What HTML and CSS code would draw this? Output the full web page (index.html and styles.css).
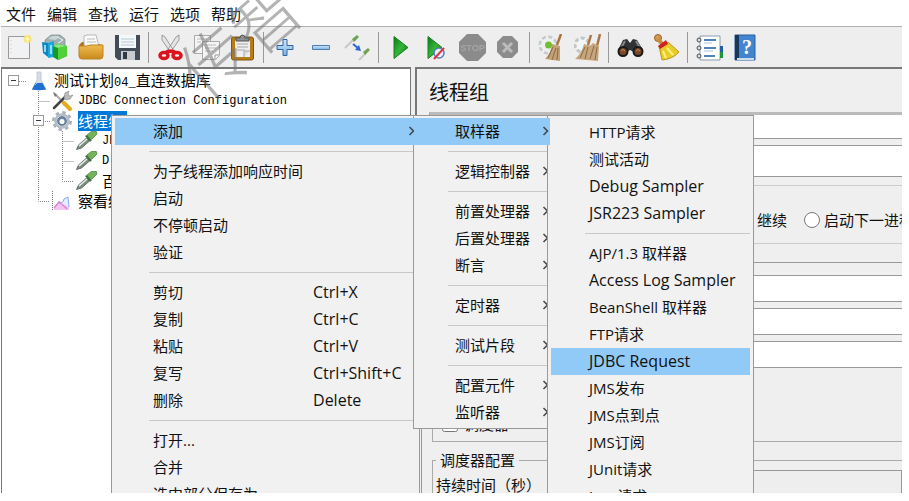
FILE: index.html
```html
<!DOCTYPE html>
<html lang="zh-CN">
<head>
<meta charset="utf-8">
<title>JMeter</title>
<link rel="stylesheet" href="styles.css">
</head>
<body>
<svg class="defs" aria-hidden="true">
  <defs>
    <linearGradient id="blue" x1="0" y1="0" x2="0" y2="1"><stop offset="0" stop-color="#cfe6f8"/><stop offset="1" stop-color="#7db2e0"/></linearGradient>
    <linearGradient id="gold" x1="0" y1="0" x2="0" y2="1"><stop offset="0" stop-color="#f0bb50"/><stop offset="1" stop-color="#c98a1c"/></linearGradient>
    <linearGradient id="play" x1="0" y1="0" x2="1" y2="1"><stop offset="0" stop-color="#0b7a18"/><stop offset=".5" stop-color="#35b53a"/><stop offset="1" stop-color="#0a6a14"/></linearGradient>
    <symbol id="chev" viewBox="0 0 8 10"><path d="M1.500 1l4 4-4 4" fill="none" stroke="#444" stroke-width="1.500"/></symbol>
    <symbol id="tee" viewBox="0 0 24 20"><path d="M12.500 0v20M12.500 10.500H24" stroke="#888" stroke-dasharray="1 1" fill="none"/></symbol>
    <symbol id="elbow" viewBox="0 0 24 20"><path d="M12.500 0v10.500H24" stroke="#888" stroke-dasharray="1 1" fill="none"/></symbol>
    <symbol id="line" viewBox="0 0 24 20"><path d="M12.500 0v20" stroke="#888" stroke-dasharray="1 1" fill="none"/></symbol>
    <symbol id="minus" viewBox="0 0 24 20"><path d="M17 10.500h7" stroke="#888" stroke-dasharray="1 1"/><rect x="6.500" y="4.500" width="10" height="10" fill="#fff" stroke="#999"/><path d="M9 9.500h5" stroke="#334"/></symbol>
    <symbol id="minusline" viewBox="0 0 24 20"><path d="M12.500 0v20M17 10.500h7" stroke="#888" stroke-dasharray="1 1"/><rect x="7.500" y="4.500" width="10" height="10" fill="#fff" stroke="#999"/><path d="M10 9.500h5" stroke="#334"/></symbol>
    <symbol id="flask" viewBox="0 0 24 20"><path d="M11 1h4v8l5 9.500H6L11 9z" fill="#d5dde6" stroke="#b5bec8" stroke-width=".7"/><path d="M9.500 12h7l3.500 6.500q-7 1.500-14 0z" fill="#1e6fd0"/><path d="M9 14l2-2" stroke="#8cc0f5"/></symbol>
    <symbol id="tools" viewBox="0 0 24 20"><path d="M4 2l11 11" stroke="#aaa" stroke-width="2"/><path d="M3 1l4 3-2 2z" fill="#777"/><path d="M14 12l6 6" stroke="#e3ad18" stroke-width="4" stroke-linecap="round"/><path d="M4 17L16 5" stroke="#444" stroke-width="2.500" stroke-linecap="round"/><path d="M14 7l1-5 4-2-1 4 2 1 3-1-3 4-4 1z" fill="#bbb" stroke="#888" stroke-width=".6"/></symbol>
    <symbol id="gear" viewBox="0 0 24 20"><g fill="none"><circle cx="12" cy="10" r="8.500" stroke="#a9b2bc" stroke-width="3" stroke-dasharray="3.400 3.270"/><circle cx="12" cy="10" r="6.500" fill="#d9dfe6" stroke="#b4bcc5" stroke-width="2.500"/><circle cx="12" cy="10" r="4.300" fill="#6d86a7" stroke="#556e91"/><circle cx="12" cy="10.500" r="2.500" fill="#fff"/></g></symbol>
    <symbol id="dropper" viewBox="0 0 24 20"><path d="M2.500 18.500l2-4.500 8-7 3 3-8 7z" fill="#7d8c80" stroke="#4d5c51" stroke-width=".8"/><path d="M5 15l8-7" stroke="#e6f0e8" stroke-width="1.500"/><path d="M11 5l2-1 5 5-2 2z" fill="#3b743a"/><path d="M13 4l5-4h4l1 3-5 5z" fill="#74b35c" stroke="#4a8a3c" stroke-width=".8"/></symbol>
    <symbol id="chart" viewBox="0 0 24 20"><path d="M2.500 0v19" stroke="#777" stroke-dasharray="1 1"/><path d="M4 17l5-7 5 3 5 3v3H4z" fill="#f3c6f1"/><path d="M4 17l5-6 5 4 3 3" stroke="#d982d9" fill="none" stroke-width="1.500"/><path d="M9 11q4 2 5-3l4-2 1 10" fill="#e4eeff" stroke="#85abe8"/></symbol>
  </defs>
</svg>
<div class="app">
  <nav class="menubar">
    <button>文件</button><button>编辑</button><button>查找</button><button>运行</button><button>选项</button><button>帮助</button>
  </nav>
  <div class="toolbar">
    <button aria-label="新建"><svg viewBox="0 0 27 27"><path d="M2.500 2.500h21v22h-21z" fill="#f1f2f3" stroke="#999"/><path d="M5 6v16" stroke="#ccc" stroke-dasharray="1 3"/><circle cx="21.500" cy="5" r="4" fill="#f6e46b" opacity=".85"/><path d="M19 5h5M21.500 2v6" stroke="#fff8b0" stroke-width="1.500"/></svg></button>
    <button aria-label="模板"><svg viewBox="0 0 27 27"><path d="M3 6l6-5h9l5 4v9H3z" fill="#9fb0b3" stroke="#7c8c90" stroke-width=".7"/><path d="M6 5l4-3h7l-3 4z" fill="#c9d6d7"/><path d="M15 3l6 3-5 3" stroke="#e8f1f2" fill="none"/><path d="M0 8l6 1v14l-5-4z" fill="#0d86c9"/><path d="M6 9l6-2v16l-6 1z" fill="#19a9d8"/><path d="M3 11v7M9 11v9" stroke="#c8f2f6" stroke-width="1.500"/><path d="M11 12l5-2 9 2v10l-9 4-5-3z" fill="#149b22"/><path d="M16 14l9-2v10l-9 4z" fill="#4fd13c"/><path d="M11 12l5-2 9 2-9 2z" fill="#8be87a"/></svg></button>
    <button aria-label="打开"><svg viewBox="0 0 27 27"><path d="M1 11l3-3h4l1 2h13l3 3v8H1z" fill="#ad7419"/><path d="M6 13V2l3-1h9l3 12z" fill="#fafafa" stroke="#aaa" stroke-width=".8"/><path d="M9 5h8M9 8h9" stroke="#bbb"/><path d="M1 12h8l3-1h13v11q0 3-3 3H4q-3 0-3-3z" fill="url(#gold)" stroke="#bd8322"/></svg></button>
    <button aria-label="保存"><svg viewBox="0 0 27 27"><path d="M1 1h25v25H4l-3-3z" fill="#424c57"/><path d="M5 1h17v13H5z" fill="#f4f8fa"/><path d="M7 5h13M7 8h13M7 11h13" stroke="#b3cbd5"/><path d="M7 17h14v9H7z" fill="#c5cbd0"/><path d="M9 18h4v7H9z" fill="#303841"/></svg></button>
    <span class="sep"></span>
    <button aria-label="剪切"><svg viewBox="0 0 27 27"><path d="M5 1l3 2 9 14-3 2L5 6zM22 1l-3 2-9 14 3 2 9-13z" fill="#e2e4e6" stroke="#888" stroke-width=".8"/><g fill="none" stroke="#d9141c" stroke-width="3.500"><ellipse cx="7" cy="21.500" rx="4" ry="3"/><ellipse cx="20" cy="21.500" rx="4" ry="3"/><path d="M9 18l4.500-1 4.500 1"/></g></svg></button>
    <button aria-label="复制"><svg viewBox="0 0 27 27"><g fill="#f5f5f5" stroke="#aaa"><path d="M1.500 1.500h16v18h-16z"/><path d="M9.500 7.500h17v14l-4 4h-13z"/></g><path d="M4 5h10M4 8h4M12 11h11M12 14h11M12 17h8" stroke="#bbb"/><path d="M22 25v-4h4" fill="none" stroke="#999"/></svg></button>
    <button aria-label="粘贴"><svg viewBox="0 0 27 27"><rect x="2.500" y="3" width="22" height="23" rx="2" fill="#b77c15" stroke="#805617"/><path d="M6 6h15v17H6z" fill="#eee"/><path d="M8 10h11M8 13h11M8 16h8" stroke="#aaa"/><path d="M15 23v-6h6" fill="#ddd" stroke="#aaa"/><path d="M7 7V4h4q0-3 2.500-3T16 4h4v3z" fill="#8a908f" stroke="#555"/></svg></button>
    <span class="sep"></span>
    <button aria-label="展开"><svg viewBox="0 0 27 27"><path d="M11 5.500h4v6h6v4h-6v6h-4v-6H5v-4h6z" fill="url(#blue)" stroke="#2c66a4"/></svg></button>
    <button aria-label="折叠"><svg viewBox="0 0 27 27"><path d="M4.500 11.500h17v4h-17z" fill="url(#blue)" stroke="#4c7eb2"/></svg></button>
    <button aria-label="切换"><svg viewBox="0 0 27 27"><path d="M1 14L9 6M15 26l7-7" stroke="#c6c9c4" stroke-width="2"/><path d="M8 5l5-4 2 2-5 5zM19 18l5-4 2 2-5 5z" fill="#6da455"/><path d="M9 10l5 4" stroke="#2a68c9" stroke-width="2"/><path d="M17 17l-6-1 4-5z" fill="#2a68c9"/></svg></button>
    <span class="sep"></span>
    <button aria-label="启动"><svg viewBox="0 0 27 27"><path d="M7 2.500v22L21 13.500z" fill="url(#play)" stroke="#16811d"/></svg></button>
    <button aria-label="不停顿启动"><svg viewBox="0 0 27 27"><path d="M5 2.500v22L19 13.500z" fill="url(#play)" stroke="#16811d"/><circle cx="16" cy="19" r="5" fill="#eef4ff" stroke="#4f7fc4" stroke-width="1.500"/><path d="M11 25l10-11" stroke="#dd3540" stroke-width="2"/></svg></button>
    <button aria-label="停止"><svg viewBox="0 0 27 27"><path d="M8 0h11l8 8v11l-8 8H8l-8-8V8z" fill="#8b8b8b"/><text x="13.500" y="17" class="stop">STOP</text></svg></button>
    <button aria-label="关闭"><svg viewBox="0 0 27 27"><path d="M8 2h9l6 6v10l-6 6H8l-6-6V8z" fill="#8c8c8c"/><path d="M8 9l9 9M17 9l-9 9" stroke="#bbb" stroke-width="3"/></svg></button>
    <span class="sep"></span>
    <button aria-label="清除"><svg viewBox="0 0 27 27"><circle cx="10" cy="11" r="8" fill="#f5f5f5" stroke="#c6cacb" stroke-width="3" stroke-dasharray="4 2.280"/><circle cx="10" cy="11" r="7" fill="#edf0f0"/><path d="M23 0l-4 11" stroke="#a87542" stroke-width="2.500"/><path d="M14 10l8 2v15l-15-2q6-6 7-15z" fill="#c3a176"/><path d="M15 13l-5 11M18 14l-4 12M20 14l-1 12" stroke="#8e6941"/><circle cx="10.500" cy="11" r="3.500" fill="#71bf30"/></svg></button>
    <button aria-label="清除全部"><svg viewBox="0 0 27 27"><circle cx="8" cy="11" r="7" fill="#f4f5f5" stroke="#bec7cb" stroke-width="3" stroke-dasharray="4 2.280"/><path d="M17 1l-3 10M26 0l-3 12" stroke="#aa7848" stroke-width="2.500"/><path d="M10 10l6 2 3-3 6 3-1 15-23-2q7-6 9-15z" fill="#c6a67d"/><path d="M11 13L6 24M14 13l-3 12M20 12l-4 13M23 13l-2 13" stroke="#8e6941"/></svg></button>
    <span class="sep"></span>
    <button aria-label="查找"><svg viewBox="0 0 27 27"><path d="M1 16l5-10 4-1 3 4 3-4 4 1 6 10-5 4-8-4-7 4z" fill="#303234"/><path d="M8 7l-4 7M19 7l4 7" stroke="#85898b" stroke-width="2"/><g fill="#7c4725" stroke="#17191b" stroke-width="2"><circle cx="6" cy="17.500" r="4.500"/><circle cx="21" cy="17.500" r="4.500"/></g><path d="M4 17q2-3 4 0M19 17q2-3 4 0" fill="none" stroke="#c78a58"/></svg></button>
    <button aria-label="重置查找"><svg viewBox="0 0 27 27"><circle cx="5" cy="4" r="3.500" fill="#d49b50" stroke="#986228"/><path d="M5 5l5 6" stroke="#c98d42" stroke-width="4"/><path d="M6 12l9-4 11 10q-6 7-17 8z" fill="#e9cc26" stroke="#b89a1f"/><path d="M5 12l8-6 2 4-8 5z" fill="#d02222"/><path d="M10 17l3 7M14 14l6 7" stroke="#fff282" stroke-width="2"/></svg></button>
    <span class="sep"></span>
    <button aria-label="函数助手"><svg viewBox="0 0 27 27"><path d="M4 2h20v24H4z" fill="#fff" stroke="#8b9aab"/><path d="M24 12h3v6h-3z" fill="#235ba7"/><path d="M24 18h3v6h-3z" fill="#20933b"/><path d="M8 6h12M8 14h12M8 22h11" stroke="#4d83b8" stroke-width="2"/><path d="M8 9h8M8 17h9" stroke="#a8c4df"/><g fill="#ddd" stroke="#4b4f52"><circle cx="3" cy="6" r="2"/><circle cx="3" cy="14" r="2"/><circle cx="3" cy="22" r="2"/></g></svg></button>
    <button aria-label="帮助"><svg viewBox="0 0 27 27"><path d="M3 1h20v25H3z" fill="#4284d0" stroke="#285e9c"/><path d="M3 1h4v25H3z" fill="#173858"/><path d="M5 24h17v2H5z" fill="#cbdde9"/><text x="15" y="20" class="q">?</text></svg></button>
  </div>
  <div class="split">
    <div class="tree">
      <div class="row"><svg><use href="#minus"/></svg><svg><use href="#flask"/></svg><span>测试计划<b class="mono">04_</b>直连数据库</span></div>
      <div class="row"><i></i><svg><use href="#tee"/></svg><svg><use href="#tools"/></svg><span class="mono">JDBC Connection Configuration</span></div>
      <div class="row"><i></i><svg><use href="#minusline"/></svg><svg><use href="#gear"/></svg><span class="selected">线程组</span></div>
      <div class="row"><i></i><svg><use href="#line"/></svg><svg><use href="#tee"/></svg><svg><use href="#dropper"/></svg><span class="mono">JD</span></div>
      <div class="row"><i></i><svg><use href="#line"/></svg><svg><use href="#tee"/></svg><svg><use href="#dropper"/></svg><span class="mono">D</span></div>
      <div class="row"><i></i><svg><use href="#line"/></svg><svg><use href="#elbow"/></svg><svg><use href="#dropper"/></svg><span>百</span></div>
      <div class="row"><i></i><svg><use href="#elbow"/></svg><svg><use href="#chart"/></svg><span>察看结</span></div>
    </div>
    <div class="divider"></div>
    <main class="panel">
      <h1>线程组</h1>
      <input class="field name" type="text" aria-label="名称">
      <input class="field note" type="text" aria-label="注释">
      <div class="actions">
        <label><input type="radio" name="action">继续</label>
        <label><input type="radio" name="action">启动下一进程循环</label>
      </div>
      <div class="props">
        <div class="box">
          <input class="field" type="text" aria-label="线程数">
          <input class="field" type="text" aria-label="时间">
          <input class="field" type="text" aria-label="循环次数">
          <label class="check"><input type="checkbox">调度器</label>
        </div>
        <fieldset>
          <legend>调度器配置</legend>
          <div class="duration"><label for="dur">持续时间（秒）</label><input id="dur" type="text" disabled></div>
        </fieldset>
      </div>
    </main>
  </div>

  <ul class="menu context">
    <li><button class="item open">添加<svg class="arrow"><use href="#chev"/></svg></button></li>
    <li class="rule"></li>
    <li><button class="item">为子线程添加响应时间</button></li>
    <li><button class="item">启动</button></li>
    <li><button class="item">不停顿启动</button></li>
    <li><button class="item">验证</button></li>
    <li class="rule"></li>
    <li><button class="item">剪切<kbd class="latin">Ctrl+X</kbd></button></li>
    <li><button class="item">复制<kbd class="latin">Ctrl+C</kbd></button></li>
    <li><button class="item">粘贴<kbd class="latin">Ctrl+V</kbd></button></li>
    <li><button class="item">复写<kbd class="latin">Ctrl+Shift+C</kbd></button></li>
    <li><button class="item">删除<kbd class="latin">Delete</kbd></button></li>
    <li class="rule"></li>
    <li><button class="item">打开...</button></li>
    <li><button class="item">合并</button></li>
    <li><button class="item">选中部分保存为</button></li>
  </ul>
  <ul class="menu add">
    <li><button class="item open">取样器<svg class="arrow"><use href="#chev"/></svg></button></li>
    <li class="rule"></li>
    <li><button class="item">逻辑控制器<svg class="arrow"><use href="#chev"/></svg></button></li>
    <li class="rule"></li>
    <li><button class="item">前置处理器<svg class="arrow"><use href="#chev"/></svg></button></li>
    <li><button class="item">后置处理器<svg class="arrow"><use href="#chev"/></svg></button></li>
    <li><button class="item">断言<svg class="arrow"><use href="#chev"/></svg></button></li>
    <li class="rule"></li>
    <li><button class="item">定时器<svg class="arrow"><use href="#chev"/></svg></button></li>
    <li class="rule"></li>
    <li><button class="item">测试片段<svg class="arrow"><use href="#chev"/></svg></button></li>
    <li class="rule"></li>
    <li><button class="item">配置元件<svg class="arrow"><use href="#chev"/></svg></button></li>
    <li><button class="item">监听器<svg class="arrow"><use href="#chev"/></svg></button></li>
  </ul>
  <ul class="menu sampler">
    <li><button class="item">HTTP请求</button></li>
    <li><button class="item">测试活动</button></li>
    <li><button class="item latin">Debug Sampler</button></li>
    <li><button class="item latin">JSR223 Sampler</button></li>
    <li class="rule"></li>
    <li><button class="item">AJP/1.3 取样器</button></li>
    <li><button class="item latin">Access Log Sampler</button></li>
    <li><button class="item">BeanShell 取样器</button></li>
    <li><button class="item">FTP请求</button></li>
    <li><button class="item latin active">JDBC Request</button></li>
    <li><button class="item">JMS发布</button></li>
    <li><button class="item">JMS点到点</button></li>
    <li><button class="item">JMS订阅</button></li>
    <li><button class="item">JUnit请求</button></li>
    <li><button class="item">Java请求</button></li>
  </ul>
  <div class="watermark" aria-hidden="true">传智</div>
</div>
</body>
</html>
```
FILE: styles.css
```css
* { box-sizing: border-box; }
body {
  margin: 0;
  background: #fff;
  color: #111;
  font: 15px/20px "Noto Sans CJK SC", sans-serif;
}
button, input { font: inherit; color: inherit; }
button { border: 0; padding: 0; background: none; }
.defs { position: absolute; width: 0; height: 0; }
.app {
  position: relative;
  display: flex;
  flex-direction: column;
  height: calc(100vh - 8px);
  margin: 0 7px 0 1px;
  overflow: hidden;
}
.menubar {
  display: flex;
  gap: 11px;
  height: 27px;
  padding: 4px 5px;
  border-bottom: 1px solid #b0b0b0;
}
.menubar button { line-height: 20px; }
.toolbar {
  display: flex;
  align-items: center;
  height: 40px;
  background: #eee;
}
.toolbar button { width: 36px; height: 27px; flex: none; }
.toolbar svg { display: block; width: 27px; height: 27px; margin: 0 auto; }
.sep { width: 1px; height: 31px; margin: 0 3px; background: #999; flex: none; }
.stop { font: bold 9px "Liberation Sans", sans-serif; fill: #a4a4a4; text-anchor: middle; }
.q { font: bold 20px "Liberation Serif", serif; fill: #fff; text-anchor: middle; }

.split { display: flex; flex: 1; min-height: 0; }
.tree {
  flex: 0 0 410px;
  padding-top: 2px;
  background: #fff;
  border: solid #777;
  border-width: 2px 1px 0 1px;
  overflow: hidden;
}
.row { display: flex; align-items: center; height: 20px; white-space: nowrap; }
.row svg, .row i { width: 24px; height: 20px; flex: none; }
.row span { margin-left: 4px; color: #000; }
.row .selected { background: #0078d7; color: #fff; padding-right: 4px; }
.mono { font: 12px/20px "Liberation Mono", monospace; }
.divider { flex: 0 0 4px; background: #eee; }
.panel {
  flex: 1;
  min-width: 0;
  background: #efefef;
  border: solid #777;
  border-width: 2px 0 0 2px;
  padding-left: 4px;
  overflow: hidden;
}
h1 { margin: 0; height: 43px; padding: 9px 8px; font-size: 20px; line-height: 28px; font-weight: 400; }
.field {
  display: block;
  width: 100%;
  height: 27px;
  margin-bottom: 6px;
  border: 1px solid #999;
  border-right: 0;
  background: #fff;
}
.name { margin-left: 8px; border-top: 3px solid #bbb; }
.note { height: 32px; margin-bottom: 8px; }
.actions {
  display: flex;
  align-items: center;
  gap: 17px;
  height: 59px;
  padding: 10px 0 0 316px;
  border: 1px solid #ccc;
  border-width: 1px 0;
  white-space: nowrap;
}
.actions label { display: flex; flex: none; align-items: center; gap: 4px; }
.actions input { width: 16px; height: 16px; margin: 0; }
.props { margin-top: 18px; padding-left: 10px; border: solid #999; border-width: 1px 0 0 1px; height: 400px; }
.box { padding-top: 12px; height: 179px; border: solid #aaa; border-width: 0 0 1px 1px; }
.check { display: flex; align-items: center; gap: 6px; margin: 46px 0 0 9px; }
.check input { width: 16px; height: 16px; margin: 0; }
fieldset { margin: 8px 0 0; padding: 0 0 0 3px; border: 1px solid #aaa; border-right: 0; min-width: 0; height: 90px; }
legend { padding: 0 4px; line-height: 20px; }
.duration { display: flex; align-items: flex-start; white-space: nowrap; }
.duration label { padding-top: 5px; }
.duration input { flex: 1; min-width: 0; height: 30px; margin-left: 8px; border: 1px solid #999; background: #eee; }

.menu {
  position: absolute;
  top: 115px;
  margin: 0;
  padding: 2px 3px;
  list-style: none;
  background: #f1f1f1;
  border: 1px solid #999;
  font-family: "Open Sans", "Noto Sans CJK SC", sans-serif;
}
.context { left: 110px; width: 309px; }
.add { left: 412px; width: 141px; padding-left: 0; }
.sampler { left: 546px; width: 207px; padding-top: 3px; }
.item {
  display: flex;
  align-items: center;
  width: 100%;
  height: 27px;
  padding: 0 0 2px 38px;
  text-align: left;
  white-space: nowrap;
}
.add .item { padding-left: 41px; }
.open, .active { background: #91c9f7; }
.open { position: relative; z-index: 1; }
.arrow { width: 8px; height: 10px; margin-left: auto; flex: none; }
.item kbd { margin-left: 130px; font-family: inherit; }
.menu .latin { font-size: 16px; }
.rule { height: 13px; padding: 6px 0; margin-left: 34px; background: #c8c8c8 content-box; }
.watermark {
  position: absolute;
  left: 169px;
  top: -13px;
  z-index: 2;
  font-size: 68px;
  line-height: 100px;
  font-weight: 300;
  color: #777;
  opacity: .55;
  transform: rotate(-41deg);
  pointer-events: none;
}
```
